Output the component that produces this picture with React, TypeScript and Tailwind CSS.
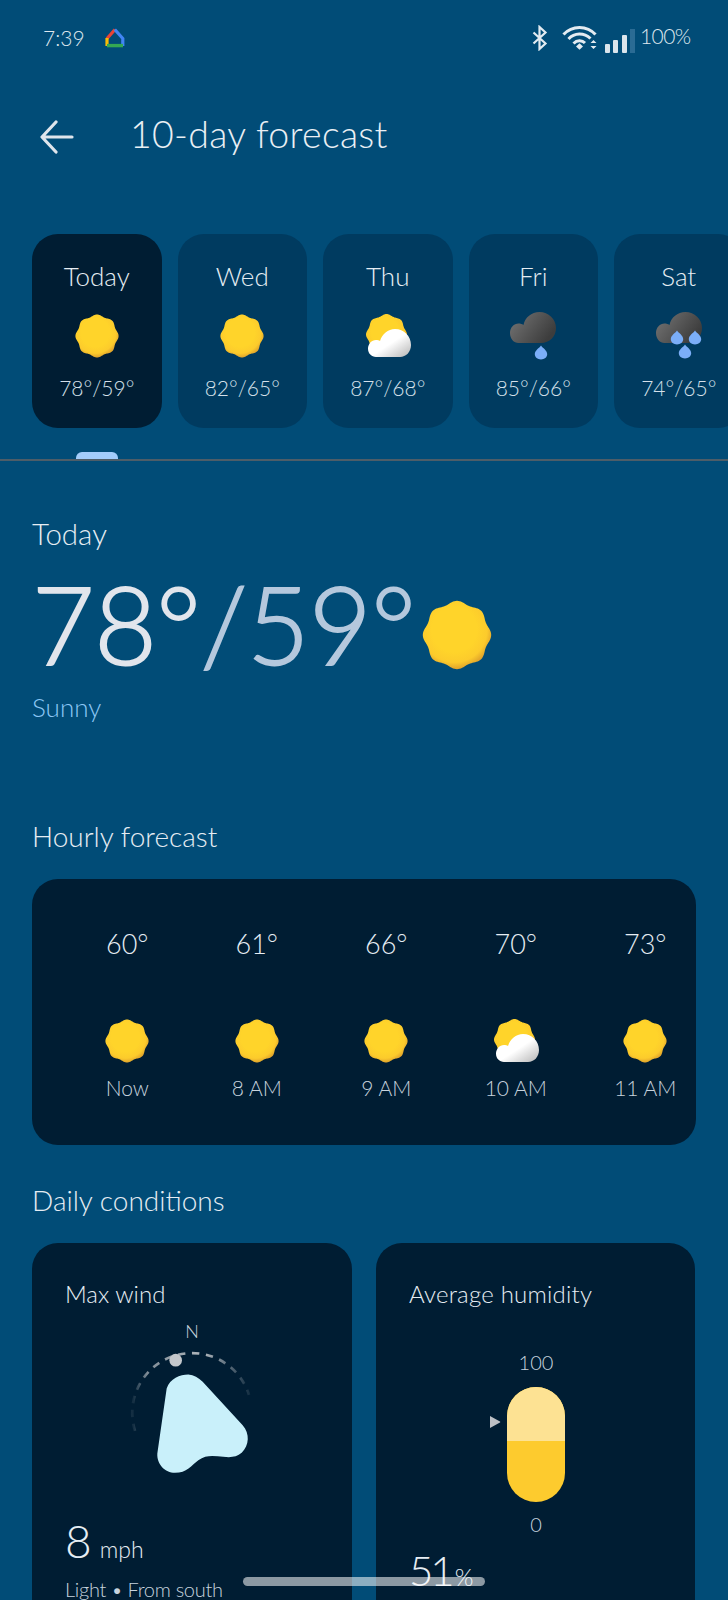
import React from "react";

const sunPath = (() => {
  const pts: string[] = [];
  for (let i = 0; i <= 160; i++) {
    const t = (i / 160) * Math.PI * 2;
    const r = 20.7 + 0.9 * Math.cos(8 * t);
    const a = t - Math.PI / 2;
    pts.push(`${(24 + r * Math.cos(a)).toFixed(2)} ${(24 + r * Math.sin(a)).toFixed(2)}`);
  }
  return "M" + pts.join("L") + "Z";
})();

function Defs() {
  return (
    <svg width="0" height="0" className="absolute">
      <defs>
        <radialGradient id="sunG" cx="0.46" cy="0.42" r="0.6">
          <stop offset="0.55" stopColor="#ffd42a" />
          <stop offset="0.8" stopColor="#fccb2c" />
          <stop offset="1" stopColor="#d99a2b" />
        </radialGradient>
        <linearGradient id="darkCloud" x1="0" y1="0" x2="1" y2="0.5">
          <stop offset="0" stopColor="#777777" />
          <stop offset="1" stopColor="#3d3d3d" />
        </linearGradient>
        <linearGradient id="whiteCloud" x1="0.2" y1="0.2" x2="1" y2="1">
          <stop offset="0.4" stopColor="#ffffff" />
          <stop offset="1" stopColor="#b5b5b5" />
        </linearGradient>
      </defs>
    </svg>
  );
}

const Sun = ({ size = 48 }: { size?: number }) => (
  <svg width={size} height={size} viewBox="0 0 48 48">
    <path d={sunPath} fill="url(#sunG)" />
  </svg>
);

const PartlyCloudy = () => (
  <svg width="48" height="48" viewBox="0 0 48 48">
    <g transform="translate(-0.3 -0.3) scale(0.95)">
      <path d={sunPath} fill="url(#sunG)" />
    </g>
    <path
      d="M12 45 C7.5 45 4 41.5 4 36.8 C4 32 7.5 28 12 28 C13.5 28 15 28.3 16 29 C18 22 24 17 31 17 C40 17 47 24 47 33 C47 40 42 45 36 45 Z"
      fill="url(#whiteCloud)"
    />
  </svg>
);

const Drop = ({ x, y }: { x: number; y: number }) => (
  <path
    transform={`translate(${x} ${y})`}
    d="M0 -7.5 C1.6 -5 6.2 -2.6 6.2 1 C6.2 4.3 3.4 6.4 0 6.4 C-3.4 6.4 -6.2 4.3 -6.2 1 C-6.2 -2.6 -1.6 -5 0 -7.5 Z"
    fill="#7baef8"
  />
);

const DarkCloudPath =
  "M9.5 31 C5 31 1 27 1 21 C1 15.5 5 11.5 9.5 11.5 C11.5 11.5 13 12 14.5 13 C16 5.5 22.5 0 30.5 0 C39.5 0 47 7 47 16 C47 24.5 40.5 31 32 31 Z";

const Rain = () => (
  <svg width="48" height="48" viewBox="0 0 48 48">
    <path d={DarkCloudPath} fill="url(#darkCloud)" />
    <Drop x={32} y={41} />
  </svg>
);

const Showers = () => (
  <svg width="48" height="48" viewBox="0 0 48 48">
    <path d={DarkCloudPath} fill="url(#darkCloud)" />
    <Drop x={22} y={26} />
    <Drop x={40} y={26} />
    <Drop x={30} y={40} />
  </svg>
);

const days = [
  { d: "Today", t: "78°/59°", i: <Sun />, active: true },
  { d: "Wed", t: "82°/65°", i: <Sun /> },
  { d: "Thu", t: "87°/68°", i: <PartlyCloudy /> },
  { d: "Fri", t: "85°/66°", i: <Rain /> },
  { d: "Sat", t: "74°/65°", i: <Showers /> },
];

const hours = [
  { t: "60°", l: "Now", i: <Sun /> },
  { t: "61°", l: "8 AM", i: <Sun /> },
  { t: "66°", l: "9 AM", i: <Sun /> },
  { t: "70°", l: "10 AM", i: <PartlyCloudy /> },
  { t: "73°", l: "11 AM", i: <Sun /> },
];

function StatusBar() {
  return (
    <div className="h-[76px] shrink-0 flex items-center pl-[43px] pr-[37px] text-[#dfe7ee]">
      <span className="text-[21px] font-light w-[62px]">7:39</span>
      <svg width="20" height="20" viewBox="0 0 20 20" fill="none" strokeWidth="3.2">
        <path d="M10 1.5 L2 10.5" stroke="#ea4335" />
        <path d="M9.8 1.5 L17.8 10.5 V18" stroke="#4285f4" />
        <path d="M2 10 V18" stroke="#fbbc04" />
        <path d="M2 17.6 H18" stroke="#34a853" strokeWidth="3.4" />
      </svg>
      <div className="ml-auto flex items-center">
        <svg width="16" height="26" viewBox="0 0 16 26" fill="none" stroke="#e3ebf1" strokeWidth="2.2">
          <path d="M1.5 7.5 L13.5 18.5 L7.5 24 V2 L13.5 7.5 L1.5 18.5" />
        </svg>
        <svg className="ml-[14px]" width="36" height="26" viewBox="0 0 36 26" fill="none" stroke="#e3ebf1" strokeWidth="3">
          <path d="M1.5 9.5 C10 0 25 0 33.5 9.5" />
          <path d="M6.5 14 C12.5 7.5 22 7.5 28.5 13.5" />
          <path d="M11.5 18.5 C15 15 20 15 23 18" />
          <path d="M14 21.5 L17.5 18.2 L21 21.5 L17.5 24.8 Z" fill="#e3ebf1" stroke="none" />
          <path d="M28.5 18 L31.5 15 L34.5 18 Z M28.5 21 L31.5 24 L34.5 21 Z" fill="#e3ebf1" stroke="none" />
        </svg>
        <div className="ml-[7px] mt-[4px] flex items-end gap-[3.5px] h-[25px]">
          <div className="w-[5px] h-[9px] bg-[#dbe5ec] rounded-[1px]" />
          <div className="w-[5px] h-[13px] bg-[#dbe5ec] rounded-[1px]" />
          <div className="w-[5px] h-[18px] bg-[#dbe5ec] rounded-[1px]" />
          <div className="w-[5px] h-[24px] bg-[#2a6b94]" />
        </div>
        <span className="ml-[5px] text-[21px] font-light w-[51px] -mt-[4px] tracking-[-0.6px]">100%</span>
      </div>
    </div>
  );
}

function DayCard({ d, t, i, active }: { d: string; t: string; i: React.ReactNode; active?: boolean }) {
  return (
    <div
      className={
        "w-[129.5px] h-[194px] shrink-0 rounded-[26px] flex flex-col items-center pt-[27px] " +
        (active ? "bg-[#001d33]" : "bg-[#003b60]")
      }
    >
      <span className="text-[26px] leading-[30px] font-light text-[#e6edf3] h-[30px]">{d}</span>
      <div className="mt-[21px] h-[48px]">{i}</div>
      <span className="mt-[15px] text-[21px] leading-[26px] font-light text-[#d5e0ea]">{t}</span>
    </div>
  );
}

export default function App() {
  return (
    <div
      className="relative w-[728px] h-[1600px] overflow-hidden bg-[#014c77] flex flex-col"
      style={{ fontFamily: "Lato, 'Noto Sans', sans-serif" }}
    >
      <Defs />
      <StatusBar />
      <div className="h-[122px] shrink-0 flex items-center pl-[40px]">
        <svg width="34" height="34" viewBox="0 0 34 34" fill="none" stroke="#dfe5ec" strokeWidth="3.2" strokeLinecap="round" strokeLinejoin="round">
          <path d="M32 17 H3 M16 2 L2 17 L16 32" />
        </svg>
        <h1 className="ml-[56px] -mt-[6px] text-[37.5px] font-light text-[#e9eff4] tracking-[0.3px]">10-day forecast</h1>
      </div>

      <div className="mt-[36px] pl-[32px] flex gap-[16px] overflow-hidden shrink-0">
        {days.map((x) => (
          <DayCard key={x.d} {...x} />
        ))}
      </div>

      <div className="mt-[24px] pl-[76px] shrink-0">
        <div className="w-[42px] h-[7px] rounded-t-[6px] bg-[#a3cdfb]" />
      </div>
      <div className="h-[2px] bg-[#4d5d68] shrink-0" />

      <div className="pl-[32px] mt-[55px] shrink-0">
        <div className="text-[29.5px] leading-[36px] font-light text-[#e6edf3]">Today</div>
        <div className="flex items-center mt-[14px] h-[113px]">
          <span className="text-[108px] leading-[106px] font-light text-[#e1e5ec] tracking-[-0.5px] [-webkit-text-stroke-width:1.8px]">
            78°<span className="text-[#b5c8dd]">/59°</span>
          </span>
          <span className="ml-[4px] mt-[24px]">
            <Sun size={76} />
          </span>
        </div>
        <div className="mt-[10px] text-[26px] leading-[36px] font-light text-[#8cc7f5]">Sunny</div>
      </div>

      <div className="pl-[32px] mt-[93px] text-[28px] leading-[36px] font-light text-[#e6edf3] shrink-0">
        Hourly forecast
      </div>

      <div className="mx-[32px] mt-[25px] h-[266px] shrink-0 rounded-[26px] bg-[#001d33] overflow-hidden flex pl-[30.5px] pt-[48px]">
        {hours.map((h) => (
          <div key={h.l} className="w-[129.5px] shrink-0 flex flex-col items-center">
            <span className="text-[27px] leading-[34px] font-light text-[#e6edf3]">{h.t}</span>
            <div className="mt-[56px] h-[48px]">{h.i}</div>
            <span className="mt-[9px] text-[21px] leading-[28px] font-light text-[#c7d3de]">{h.l}</span>
          </div>
        ))}
      </div>

      <div className="pl-[32px] mt-[37px] text-[28px] leading-[36px] font-light text-[#e6edf3] shrink-0">
        Daily conditions
      </div>

      <div className="mx-[32px] mt-[25px] flex gap-[24px] shrink-0">
        <div className="relative w-[320px] h-[400px] rounded-[26px] bg-[#001d33] pl-[33px] pt-[36px]">
          <div className="text-[24px] leading-[30px] font-light text-[#e6edf3]">Max wind</div>
          <div className="absolute left-[90px] top-[76px] w-[140px] flex flex-col items-center">
            <span className="text-[18px] leading-[24px] font-light text-[#c7d3de]">N</span>
          </div>
          <svg className="absolute left-[98px] top-[107px]" width="140" height="147" viewBox="330 330 420 440" fill="none">
            <defs>
              <linearGradient id="arcG" gradientUnits="userSpaceOnUse" x1="340" y1="0" x2="690" y2="0">
                <stop offset="0" stopColor="#c4c8cc" stopOpacity="0.1" />
                <stop offset="0.12" stopColor="#c4c8cc" stopOpacity="0.65" />
                <stop offset="0.6" stopColor="#c4c8cc" stopOpacity="0.9" />
                <stop offset="1" stopColor="#c4c8cc" stopOpacity="0.1" />
              </linearGradient>
            </defs>
            <path d="M345 572 A178 178 0 0 1 687 464" stroke="url(#arcG)" strokeWidth="8" strokeDasharray="22 20" />
            <circle cx="467" cy="360" r="19" fill="#c4c8cc" />
            <path
              d="M440 445 C450 415 480 403 505 403 C522 405 535 412 548 425 L668 555 C690 580 688 615 665 638 C650 652 630 652 610 650 C585 648 560 642 535 660 C515 675 500 698 465 698 C435 698 410 672 412 640 Z"
              fill="#c9f0fa"
            />
          </svg>
          <div className="mt-[207px] flex items-baseline text-[#e6edf3] font-light">
            <span className="text-[46px] leading-[50px]">8</span>
            <span className="ml-[8px] text-[23px]">mph</span>
          </div>
          <div className="mt-[9px] text-[20px] leading-[26px] font-light text-[#c7d3de] tracking-[-0.3px]">
            Light • From south
          </div>
        </div>

        <div className="relative w-[319px] h-[400px] rounded-[26px] bg-[#001d33] pl-[33px] pt-[36px]">
          <div className="text-[24px] leading-[30px] font-light text-[#e6edf3] tracking-[0.2px]">Average humidity</div>
          <div className="absolute left-[131px] top-[106px] w-[58px] flex flex-col items-center">
            <span className="text-[20px] leading-[26px] font-light text-[#c7d3de]">100</span>
            <div className="relative mt-[12px] w-[58px] h-[115px] rounded-full overflow-hidden bg-[#fdcb2e]">
              <div className="h-[54px] bg-[#fde293]" />
            </div>
            <span className="mt-[9px] text-[20px] leading-[26px] font-light text-[#c7d3de]">0</span>
            <svg className="absolute left-[-18px] top-[66px]" width="12" height="14" viewBox="0 0 12 14">
              <path d="M1 1 L11 6.5 Q11.6 7 11 7.5 L1 13 Z" fill="#bdc1c6" />
            </svg>
          </div>
          <div className="absolute left-[33px] top-[305px] flex items-baseline text-[#e6edf3] font-light">
            <span className="text-[42px] leading-[44px] tracking-[-3px]">51</span>
            <span className="ml-[3px] text-[24px]">%</span>
          </div>
        </div>
      </div>

      <div className="absolute left-[243px] top-[1577px] w-[242px] h-[9px] rounded-full bg-[#ffffff8c]" />
    </div>
  );
}
